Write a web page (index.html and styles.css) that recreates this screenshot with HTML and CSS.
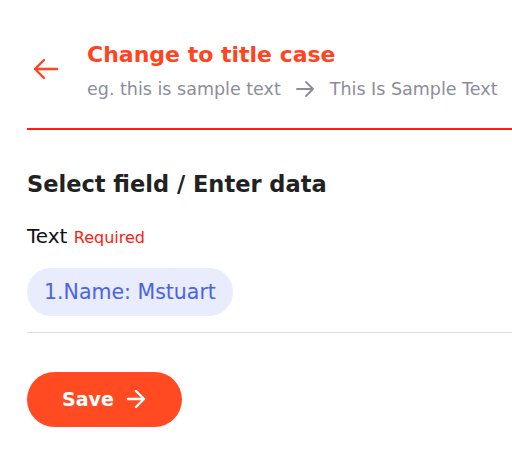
FILE: index.html
```html
<!DOCTYPE html>
<html lang="en">
<head>
    <meta charset="UTF-8">
    <meta name="viewport" content="width=device-width, initial-scale=1.0">
    <title>Change to title case</title>
    <link rel="stylesheet" href="styles.css">
</head>
<body>

<div class="page">
    <div class="header">
        <button class="back" aria-label="Back">
            <svg width="26" height="22" viewBox="0 0 26 22" fill="none" stroke="#ff4420" stroke-width="2.4" stroke-linecap="round" stroke-linejoin="round">
                <path d="M24 11H2M11 2L2 11l9 9"/>
            </svg>
        </button>
        <div class="header-text">
            <h1>Change to title case</h1>
            <div class="example">
                <span>eg. this is sample text</span>
                <svg class="example-arrow" width="18" height="16" viewBox="0 0 18 16" fill="none" stroke="#8c8c9c" stroke-width="1.8" stroke-linecap="round" stroke-linejoin="round">
                    <path d="M1 8h16M10 1l7 7-7 7"/>
                </svg>
                <span>This Is Sample Text</span>
            </div>
        </div>
    </div>
    <div class="divider"></div>

    <div class="section">
        <h2>Select field / Enter data</h2>
        <div class="label">Text <span class="required">Required</span></div>
        <div class="field">
            <span class="chip">1.Name: Mstuart</span>
        </div>
        <button class="save" type="button">
            Save
            <svg width="20" height="18" viewBox="0 0 20 18" fill="none" stroke="#fff" stroke-width="2.4" stroke-linecap="round" stroke-linejoin="round">
                <path d="M2 9h16M10 1l8 8-8 8"/>
            </svg>
        </button>
    </div>
</div>

</body>
</html>
```

FILE: styles.css
```css
body {
    margin: 0;
    padding: 0;
    background: #fff;
    font-family: "DejaVu Sans", sans-serif;
}

.page {
    padding-left: 27px;
}

.header {
    display: flex;
    align-items: flex-start;
    padding-top: 40px;
    padding-bottom: 27px;
}

.divider {
    height: 1.5px;
    background: #ff1e10;
}

.back {
    background: none;
    border: none;
    padding: 0;
    margin: 18px 0 0 6px;
    width: 54px;
    text-align: left;
    cursor: pointer;
}

.header-text h1 {
    margin: 0;
    font-size: 22px;
    font-weight: bold;
    color: #ff4420;
    line-height: 29px;
}

.example {
    display: flex;
    align-items: center;
    margin-top: 8px;
    font-size: 17.5px;
    color: #8c8c9c;
    line-height: 24px;
    white-space: nowrap;
}

.example-arrow {
    margin: 0 16px 0 15px;
}

.section {
    padding-top: 40px;
}

h2 {
    margin: 0;
    font-size: 22.5px;
    font-weight: bold;
    color: #222;
    line-height: 28px;
}

.label {
    margin-top: 25px;
    font-size: 20px;
    color: #111;
    line-height: 26px;
}

.required {
    font-size: 16px;
    color: #ff1a10;
}

.field {
    padding: 17px 0 16px;
    border-bottom: 1px solid #dcdce4;
}

.chip {
    display: inline-block;
    height: 48px;
    line-height: 48px;
    padding: 0 17px;
    border-radius: 24px;
    background: #e8ecfd;
    color: #4a63e6;
    font-size: 20.5px;
}

.save {
    display: flex;
    align-items: center;
    gap: 12px;
    margin-top: 39px;
    height: 55px;
    padding: 0 36px 0 35px;
    border: none;
    border-radius: 28px;
    background: #ff4a22;
    color: #fff;
    font-family: inherit;
    font-size: 19px;
    font-weight: bold;
    cursor: pointer;
}
```
